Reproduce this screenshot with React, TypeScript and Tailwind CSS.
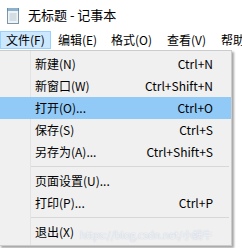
import React from 'react';

type Item = { label: string; shortcut?: string; active?: boolean } | 'sep';

const items: Item[] = [
    { label: '新建(N)', shortcut: 'Ctrl+N' },
    { label: '新窗口(W)', shortcut: 'Ctrl+Shift+N' },
    { label: '打开(O)...', shortcut: 'Ctrl+O', active: true },
    { label: '保存(S)', shortcut: 'Ctrl+S' },
    { label: '另存为(A)...', shortcut: 'Ctrl+Shift+S' },
    'sep',
    { label: '页面设置(U)...' },
    { label: '打印(P)...', shortcut: 'Ctrl+P' },
    'sep',
    { label: '退出(X)' },
];

const NotepadIcon = () => (
    <svg width="16" height="17" viewBox="0 0 16 17">
        <rect x="2.5" y="2.5" width="11" height="14" fill="#eef3f6" stroke="#7d97a8" />
        <rect x="2" y="1" width="12" height="3" fill="#5b8fb7" />
        <path d="M4 1v3M6 1v3M8 1v3M10 1v3M12 1v3" stroke="#d8e6f0" strokeWidth="0.8" />
        <path d="M4.5 7h7M4.5 9h7M4.5 11h7M4.5 13h7" stroke="#b6c7d2" />
    </svg>
);

export default function App() {
    return (
        <div
            className="relative w-[242px] h-[248px] bg-white overflow-hidden text-[12px] text-black"
            style={{ fontFamily: '"Noto Sans CJK SC", "Noto Sans", sans-serif' }}
        >
            <div className="h-[30px] flex items-center pl-[5px] gap-[7px]">
                <NotepadIcon />
                <span className="text-[13px] text-[#000]">无标题 - 记事本</span>
            </div>
            <div className="h-[20px] flex items-center whitespace-nowrap">
                <div className="h-[18px] shrink-0 flex items-center pl-[5px] bg-[#cce8ff] border border-[#99d1ff] w-[51px]">
                    文件(F)
                </div>
                <div className="shrink-0 pl-[7px] w-[60px]">编辑(E)</div>
                <div className="shrink-0 w-[56px]">格式(O)</div>
                <div className="shrink-0 w-[54px]">查看(V)</div>
                <div className="shrink-0">帮助(H)</div>
            </div>
            <div className="w-[233px] -ml-px bg-[#f0f0f0] border border-[#cccccc] shadow-[2px_2px_2px_rgba(0,0,0,0.35)] py-[2px] relative">
                <div className="absolute left-[30px] top-0 bottom-0 w-px bg-[#e3e3e3]" />
                {items.map((it, i) =>
                    it === 'sep' ? (
                        <div key={i} className="h-[7px] flex items-center pl-[31px] pr-[2px]">
                            <div className="h-px w-full bg-[#d7d7d7]" />
                        </div>
                    ) : (
                        <div
                            key={i}
                            className={`h-[22px] flex items-center justify-between pl-[35px] pr-[18px] relative ${it.active ? 'bg-[#91c9f7]' : ''}`}
                        >
                            <span>{it.label}</span>
                            {it.shortcut && <span>{it.shortcut}</span>}
                        </div>
                    )
                )}
            </div>
            <div className="absolute left-[80px] top-[227px] text-[10px] text-white/80 whitespace-nowrap [text-shadow:0_0_1px_rgba(120,140,180,0.6)]">
                https://blog.csdn.net/小蜗牛
            </div>
        </div>
    );
}
